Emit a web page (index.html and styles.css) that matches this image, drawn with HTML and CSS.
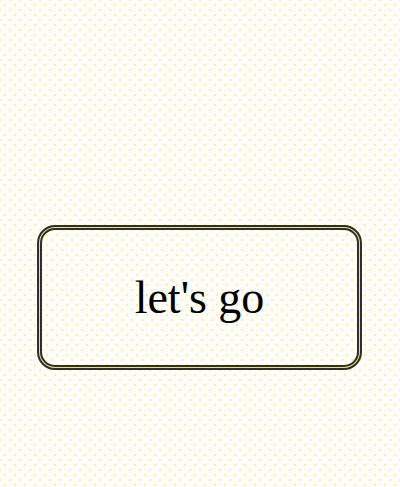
FILE: index.html
```html
<!DOCTYPE html>
<html>
<head>
<meta charset="utf-8">
<link rel="stylesheet" href="styles.css">
</head>
<body>
<main class="stage">
  <button class="go-btn" type="button">let's go</button>
</main>
</body>
</html>
```

FILE: styles.css
```css
html, body {
  margin: 0;
  padding: 0;
  height: 100%;
}
body {
  background-color: #fdfdff;
  background-image:
    radial-gradient(circle, #f8f25c 0.6px, transparent 1px),
    radial-gradient(circle, #f8f25c 0.6px, transparent 1px);
  background-size: 10px 10px, 10px 10px;
  background-position: 0 0, 5px 5px;
}
.stage {
  display: flex;
  justify-content: center;
  padding-top: 225px;
  padding-right: 1px;
}
.go-btn {
  box-sizing: border-box;
  width: 325px;
  height: 145px;
  border: 5px double #2e2e2e;
  border-radius: 18px;
  background:
    radial-gradient(circle, #f8f25c 0.6px, transparent 1px) 0 0 / 10px 10px padding-box,
    radial-gradient(circle, #f8f25c 0.6px, transparent 1px) 5px 5px / 10px 10px padding-box,
    linear-gradient(#fdfdff, #fdfdff) padding-box,
    linear-gradient(#e8e27a, #e8e27a) border-box;
  font-family: "Liberation Serif", "Times New Roman", serif;
  font-size: 46px;
  color: #000;
  padding: 0;
  cursor: pointer;
}
```
